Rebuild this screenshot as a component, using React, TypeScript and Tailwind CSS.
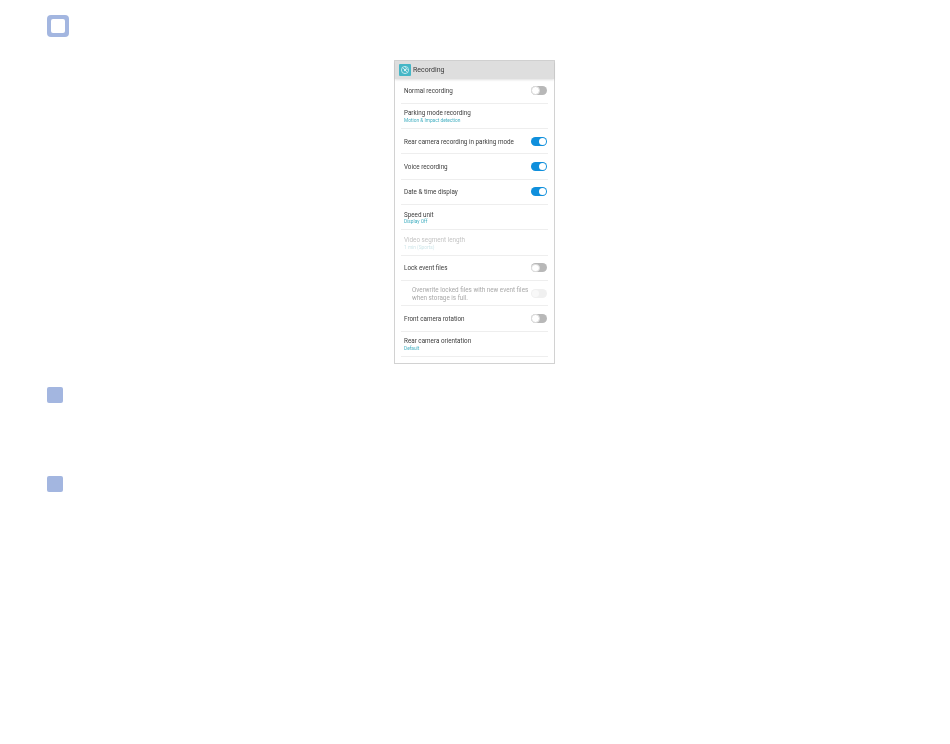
function Toggle({ state }: { state: "on" | "off" | "disabled" }) {
  if (state === "on") {
    return (
      <div className="flex h-[9px] w-4 shrink-0 items-center justify-end rounded-full bg-[#0f8fdc] pr-[1px]">
        <div className="h-[7px] w-[7px] rounded-full bg-white" />
      </div>
    );
  }
  if (state === "disabled") {
    return (
      <div className="flex h-[9px] w-4 shrink-0 items-center rounded-full bg-[#f0f0f0] pl-[1px]">
        <div className="h-[7px] w-[7px] rounded-full bg-[#f8f8f8]" />
      </div>
    );
  }
  return (
    <div className="flex h-[9px] w-4 shrink-0 items-center rounded-full bg-[#b8b8b8]">
      <div className="h-[8.5px] w-[8.5px] rounded-full border border-[#dddddd] bg-white" />
    </div>
  );
}

function Row({
  title,
  sub,
  toggle,
  disabled,
}: {
  title: string;
  sub?: string;
  toggle?: "on" | "off";
  disabled?: boolean;
}) {
  return (
    <div className="flex h-[25.33px] items-center justify-between border-b border-[#eeeeee] pl-[3px] pr-[1px]">
      <div className="mt-[1px] flex flex-col">
        <span className={`text-[6.3px] leading-[8px] ${disabled ? "text-[#c4c4c4]" : "text-[#3c3c3c]"}`}>{title}</span>
        {sub && (
          <span className={`mt-[0.5px] text-[4.8px] leading-[5.5px] ${disabled ? "text-[#cfe6ea]" : "text-[#45b0c2]"}`}>{sub}</span>
        )}
      </div>
      {toggle && <Toggle state={toggle} />}
    </div>
  );
}

export default function App() {
  return (
    <div className="flex h-[744px] w-[950px] flex-col items-start bg-white pl-[47px] pt-[15px] font-['Roboto',sans-serif] blur-[0.3px]">
      <div className="flex h-[22px] w-[22px] items-center justify-center rounded-[4px] bg-[#a3b6e0]">
        <div className="h-[14px] w-[14px] rounded-[2px] bg-white" />
      </div>

      <div className="ml-[347px] mt-[23px] h-[304px] w-[161px] border border-[#d2d2d2] bg-white">
        <div className="flex h-[17.5px] items-center gap-[2px] bg-[#dedede] pl-[4px] shadow-[0_1px_2px_rgba(0,0,0,0.12)]">
          <div className="flex h-[12px] w-[12px] items-center justify-center rounded-[1px] bg-[#45b6c6]">
            <svg viewBox="0 0 12 12" className="h-[12px] w-[12px]" fill="none" stroke="#d8f1f4" strokeWidth="0.8">
              <circle cx="6" cy="6" r="3.6" />
              <path d="M3.6 3.6 8.4 8.4M6 2.4 8.4 6" />
              <circle cx="6" cy="6" r="1.2" fill="#d8f1f4" stroke="none" />
            </svg>
          </div>
          <span className="mt-[1px] text-[7px] leading-none text-[#3a3a3a]">Recording</span>
        </div>
        <div className="mx-[6px]">
          <Row title="Normal recording" toggle="off" />
          <Row title="Parking mode recording" sub="Motion & Impact detection" />
          <Row title="Rear camera recording in parking mode" toggle="on" />
          <Row title="Voice recording" toggle="on" />
          <Row title="Date & time display" toggle="on" />
          <Row title="Speed unit" sub="Display Off" />
          <Row title="Video segment length" sub="1 min (Sports)" disabled />
          <Row title="Lock event files" toggle="off" />
          <div className="flex h-[25.33px] items-center justify-between border-b border-[#eeeeee] pl-[11px] pr-[1px]">
            <span className="mt-[1px] w-[118px] text-[6.3px] leading-[8px] text-[#a8a8a8]">
              Overwrite locked files with new event files when storage is full.
            </span>
            <Toggle state="disabled" />
          </div>
          <Row title="Front camera rotation" toggle="off" />
          <Row title="Rear camera orientation" sub="Default" />
        </div>
      </div>

      <div className="mt-[23px] h-4 w-4 rounded-[2px] bg-[#a3b6e0]" />
      <div className="mt-[73px] h-4 w-4 rounded-[2px] bg-[#a3b6e0]" />
    </div>
  );
}
